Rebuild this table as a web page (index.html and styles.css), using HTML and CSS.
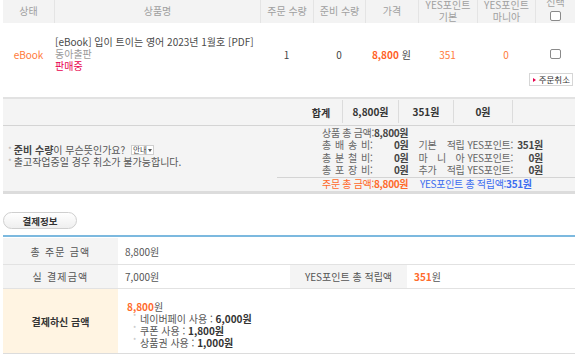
FILE: index.html
```html
<!DOCTYPE html>
<html lang="ko">
<head>
<meta charset="utf-8">
<title>주문 상세</title>
<link rel="stylesheet" href="styles.css">
</head>
<body>
<div class="page">
  <section class="order">
    <div class="thead">
      <div class="th">상태</div>
      <div class="th">상품명</div>
      <div class="th">주문 수량</div>
      <div class="th">준비 수량</div>
      <div class="th">가격</div>
      <div class="th">YES포인트<br>기본</div>
      <div class="th">YES포인트<br>마니아</div>
      <div class="th sel"><span class="sel-label">선택</span><span class="chk"></span></div>
    </div>
    <div class="trow">
      <div class="td status">eBook</div>
      <div class="td product">
        <span class="title">[eBook] 입이 트이는 영어 2023년 1월호 [PDF]</span>
        <span class="pub">동아출판</span>
        <span class="sale">판매중</span>
      </div>
      <div class="td">1</div>
      <div class="td">0</div>
      <div class="td price"><b>8,800</b> 원</div>
      <div class="td point">351</div>
      <div class="td point">0</div>
      <div class="td"><span class="chk"></span></div>
    </div>
    <div class="actions"><button class="cancel">주문취소</button></div>
  </section>

  <section class="summary">
    <div class="sum-row">
      <div></div>
      <div class="sum-label">합계</div>
      <div class="sum-val">8,800원</div>
      <div class="sum-val">351원</div>
      <div class="sum-val">0원</div>
      <div class="sum-val"></div>
    </div>
    <div class="sum-detail">
      <div class="notes">
        <p><span class="ast">*</span><b>준비 수량</b>이 무슨뜻인가요? <span class="guide">안내<i class="tri"></i></span></p>
        <p><span class="ast">*</span>출고작업중일 경우 취소가 불가능합니다.</p>
      </div>
      <div class="breakdown">
        <div class="bd-grid">
          <div class="span-a">상품 총 금액:<b>8,800원</b></div>
          <div class="bd-spacer"></div>
          <div></div><div></div>

          <div class="lab"><span class="j">총 배 송 비</span>:</div>
          <div class="val">0원</div>
          <div></div>
          <div class="lab"><span class="j w2">기본 적립</span>YES포인트:</div>
          <div class="val">351원</div>

          <div class="lab"><span class="j">총 분 철 비</span>:</div>
          <div class="val">0원</div>
          <div></div>
          <div class="lab"><span class="j w2">마 니 아</span>YES포인트:</div>
          <div class="val">0원</div>

          <div class="lab"><span class="j">총 포 장 비</span>:</div>
          <div class="val">0원</div>
          <div></div>
          <div class="lab"><span class="j w2">추가 적립</span>YES포인트:</div>
          <div class="val">0원</div>
        </div>
        <div class="bd-total">
          <div class="tot-a">주문 총 금액:<b>8,800원</b></div>
          <div class="tot-b">YES포인트 총 적립액:<b>351원</b></div>
        </div>
      </div>
    </div>
  </section>

  <div class="tab">결제정보</div>

  <section class="pay">
    <div class="pl wide">총 주문 금액</div>
    <div class="pv span3">8,800원</div>

    <div class="pl wide">실 결제금액</div>
    <div class="pv">7,000원</div>
    <div class="pl">YES포인트 총 적립액</div>
    <div class="pv"><span class="orange">351</span>원</div>

    <div class="pl paid">결제하신 금액</div>
    <div class="pv span3 paid-val">
      <div><span class="orange">8,800</span>원</div>
      <ul class="uses">
        <li>네이버페이 사용 : <b>6,000원</b></li>
        <li>쿠폰 사용 : <b>1,800원</b></li>
        <li>상품권 사용 : <b>1,000원</b></li>
      </ul>
    </div>
  </section>
</div>
</body>
</html>
```
FILE: styles.css
```css
* { box-sizing: border-box; }
body {
  margin: 0;
  background: #fff;
  font-family: "Noto Sans CJK KR", "Noto Sans", sans-serif;
  font-size: 10px;
  color: #555;
}
p, ul { margin: 0; padding: 0; }
b { font-weight: 700; }
.page { width: 572px; margin: -2px 0 0 3px; }

/* order table */
.thead, .trow {
  display: grid;
  grid-template-columns: 51px 206px 53px 52px 53px 59px 58px 40px;
}
.thead { height: 25px; background: #f3f3f3; color: #a0a0a0; }
.th {
  display: flex; flex-direction: column; align-items: center; justify-content: center;
  text-align: center; line-height: 12px;
  border-left: 1px solid #e4e4e4;
}
.th:first-child { border-left: 0; }
.th.sel { justify-content: flex-start; }
.sel-label { line-height: 8px; height: 8px; }
.sel .chk { margin-top: 5px; }
.chk {
  display: inline-block; width: 11px; height: 10px;
  border: 1px solid #8a8a8a; border-radius: 2px; background: #fff;
}
.trow { padding-top: 13px; }
.td {
  height: 36px; display: flex; align-items: center; justify-content: center;
  color: #444;
}
.status { color: #ff7a3a; }
.product {
  flex-direction: column; align-items: flex-start; justify-content: center;
  line-height: 12px; padding-left: 1px;
}
.title { color: #4a4a4a; }
.pub { color: #9a9a9a; }
.sale { color: #e8004e; }
.price b { color: #ff5f1f; margin-right: 3px; }
.point { color: #ff7a3a; }
.actions { display: flex; justify-content: flex-end; margin-top: 1px; padding-right: 2px; }
.cancel {
  height: 13px; padding: 0 2px 0 3px;
  display: flex; align-items: center; gap: 3px;
  border: 1px solid #d6d6d6; background: #fff;
  font: 8.5px/11px "Noto Sans CJK KR", sans-serif; color: #333;
}
.cancel::before {
  content: ""; border-left: 3px solid #e8004e;
  border-top: 2px solid transparent; border-bottom: 2px solid transparent;
}

/* summary */
.summary {
  margin-top: 11px; background: #f4f4f4;
  border-top: 2px solid #e2e2e2; border-bottom: 3px solid #dcdcdc;
}
.sum-row {
  display: grid; grid-template-columns: 297px 42px 56px 55px 59px 63px;
  height: 27px; border-bottom: 1px solid #d4d4d4;
  font-weight: 700; color: #333;
}
.sum-row > div { display: flex; align-items: center; justify-content: center; }
.sum-val { border-left: 1px solid #dcdcdc; margin: 1px 0 2px; }
.sum-detail { display: grid; grid-template-columns: 274px 1fr; }
.notes { padding: 18px 0 0 5px; line-height: 12px; color: #555; }
.notes b { color: #444; }
.ast { color: #b0b0b0; font-size: 8px; margin-right: 2px; vertical-align: top; }
.guide {
  display: inline-flex; align-items: center; gap: 1px;
  height: 10px; padding: 0 1px; margin-left: 3px;
  border: 1px solid #cfcfcf; background: #fff;
  font-size: 7.5px; line-height: 8px; color: #444; vertical-align: 1px;
}
.tri {
  border-top: 3px solid #555; border-left: 2px solid transparent; border-right: 2px solid transparent;
}
.breakdown { padding-top: 1px; }
.bd-grid {
  display: grid; grid-template-columns: max-content 36px 10px max-content 30px;
  padding-left: 45px; line-height: 12px; height: 49px; color: #666; white-space: nowrap;
  letter-spacing: -0.3px;
}
.bd-grid b { color: #444; }
.span-a { grid-column: 1 / span 2; }
.bd-spacer { grid-column: 3; }
.lab { display: flex; }
.j { display: inline-block; width: 48px; height: 12px; text-align: justify; text-align-last: justify; white-space: normal; }
.j.w2 { width: 46px; margin-right: 3px; }
.val { text-align: right; font-weight: 700; color: #444; }
.bd-total {
  margin-top: 1px; border-top: 1px solid #d4d4d4;
  display: flex; padding: 0 0 1px 45px; line-height: 12px;
  white-space: nowrap; letter-spacing: -0.3px;
}
.tot-a { color: #ff6a2b; width: 98px; }
.tot-b { color: #3b6cf0; }

/* tab */
.tab {
  margin-top: 18px; width: 74px; height: 17px;
  display: flex; align-items: center; justify-content: center;
  border: 1px solid #cfcfcf; border-radius: 9px;
  background: linear-gradient(#ffffff, #efefef);
  font-weight: 700; font-size: 9.5px; color: #333;
}

/* payment */
.pay {
  margin-top: 6px; display: grid;
  grid-template-columns: 115px 172px 117px 1fr;
  border-top: 2px solid #7cb9df; padding-top: 1px;
}
.pl, .pv {
  display: flex; align-items: center;
  border-bottom: 1px solid #e2e2e2; min-height: 24px;
}
.pl { justify-content: center; background: #f4f4f4; color: #555; }
.pl.wide { letter-spacing: 1.2px; }
.pv { padding-left: 7px; color: #555; }
.pay > :nth-child(-n+2) { min-height: 27px; }
.span3 { grid-column: 2 / span 3; }
.orange { color: #ff6a2b; font-weight: 700; }
.pl.paid { background: #fff4e2; font-weight: 700; color: #333; height: 65px; }
.paid-val {
  display: block; padding: 12px 0 0 9px; line-height: 12px;
  border-bottom-color: #dcdcdc;
}
.pl.paid { border-bottom-color: #dcdcdc; }
.uses { list-style: none; padding-left: 10px; }
.uses li { position: relative; padding-left: 3px; }
.uses li::before {
  content: "*"; position: absolute; left: -4px; top: -3px;
  font-size: 7px; color: #bbb;
}
.uses b { color: #333; }
```
